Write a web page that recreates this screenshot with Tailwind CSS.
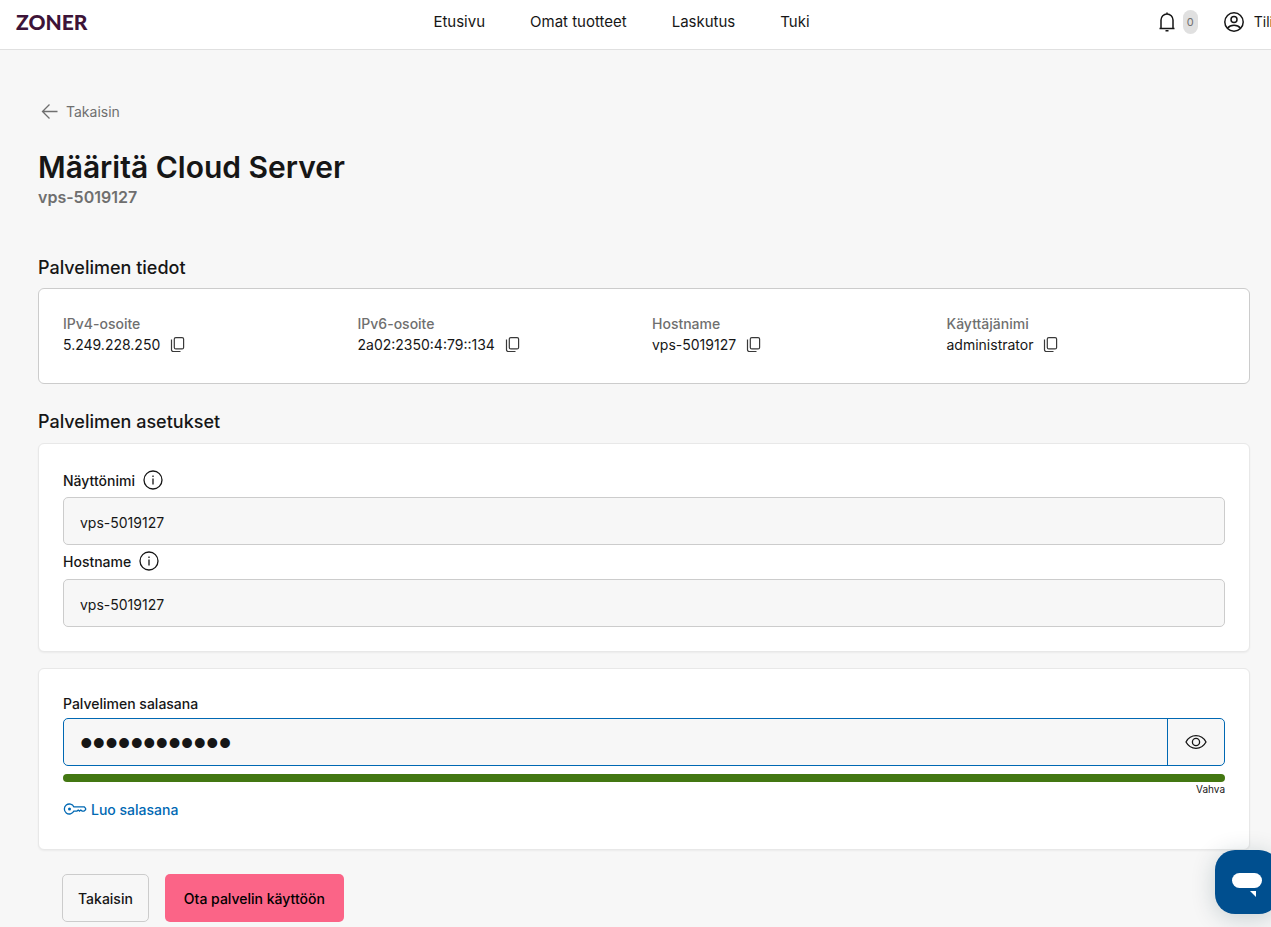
<!DOCTYPE html>
<html lang="fi">
<head>
    <meta charset="UTF-8">
    <meta name="viewport" content="width=device-width, initial-scale=1.0">
    <title>Määritä Cloud Server</title>
    <script src="https://cdn.jsdelivr.net/npm/@tailwindcss/browser@4"></script>
</head>
<body class="min-h-screen overflow-x-hidden bg-[#f7f7f7] font-['Inter',sans-serif] text-sm text-[#161616]">

    <!-- Top bar -->
    <header class="grid h-[50px] grid-cols-[1fr_auto_1fr] items-center border-b border-[#e0e0e0] bg-white pb-1.5 pl-4">
        <a href="#" class="font-['Lato',sans-serif] text-[21px] font-black text-[#3d1438]">ZONER</a>
        <nav class="mr-11 flex gap-[45px] text-[15px]">
            <a href="#">Etusivu</a>
            <a href="#">Omat tuotteet</a>
            <a href="#">Laskutus</a>
            <a href="#">Tuki</a>
        </nav>
        <div class="-mr-0.5 flex items-center justify-end">
            <button class="flex items-center gap-1" aria-label="Ilmoitukset">
                <svg class="size-6" viewBox="0 0 24 24" fill="none" stroke="currentColor" stroke-width="1.5">
                    <path d="M6 18.5V10a6 6 0 0 1 12 0v8.500M4.500 18.500h15M12 4V2.500M10.500 20.800h3"/>
                </svg>
                <span class="rounded-lg bg-[#e0e0e0] px-1 py-1 text-[11px] leading-4 text-[#6f6f6f]">0</span>
            </button>
            <button class="ml-6 flex items-center gap-2">
                <svg class="size-6" viewBox="0 0 24 24" fill="none" stroke="currentColor" stroke-width="1.5">
                    <circle cx="12" cy="12" r="9.200"/>
                    <circle cx="12" cy="9.500" r="3"/>
                    <path d="M5.500 18.300c1.500-2 3.700-3 6.500-3s5 1 6.500 3"/>
                </svg>
                Tili
            </button>
        </div>
    </header>

    <main class="pt-[50px] pr-[21px] pb-1 pl-[38px]">
        <a href="#" class="flex w-fit items-center gap-1 text-[#6f6f6f]">
            <svg class="size-6" viewBox="0 0 24 24" fill="none" stroke="currentColor" stroke-width="1.3">
                <path d="M19.500 11.500h-15M11.500 4.500l-7 7 7 7"/>
            </svg>
            Takaisin
        </a>
        <h1 class="mt-[23px] text-3xl leading-10 font-semibold">Määritä Cloud Server</h1>
        <p class="text-base leading-5 font-semibold text-[#6f6f6f]">vps-5019127</p>

        <!-- Server info -->
        <h2 class="mt-[49px] text-lg leading-6 font-medium">Palvelimen tiedot</h2>
        <dl class="mt-2 grid h-24 grid-cols-4 gap-4 rounded-md border border-[#cccccc] bg-white px-6 pt-[25px]">
            <div>
                <dt class="leading-5 font-medium text-[#6f6f6f]">IPv4-osoite</dt>
                <dd class="flex items-center gap-2.5 leading-[22px]">5.249.228.250
                    <button aria-label="Kopioi IPv4-osoite"><svg class="size-4" viewBox="0 0 16 16" fill="none" stroke="#393939" stroke-width="1.200"><rect x="4.300" y="0.600" width="9.300" height="11.300" rx="1.500"/><path d="M1.500 2.500v10.200a1.800 1.800 0 0 0 1.800 1.800H10.500"/></svg></button>
                </dd>
            </div>
            <div>
                <dt class="leading-5 font-medium text-[#6f6f6f]">IPv6-osoite</dt>
                <dd class="flex items-center gap-2.5 leading-[22px]">2a02:2350:4:79::134
                    <button aria-label="Kopioi IPv6-osoite"><svg class="size-4" viewBox="0 0 16 16" fill="none" stroke="#393939" stroke-width="1.200"><rect x="4.300" y="0.600" width="9.300" height="11.300" rx="1.500"/><path d="M1.500 2.500v10.200a1.800 1.800 0 0 0 1.800 1.800H10.500"/></svg></button>
                </dd>
            </div>
            <div>
                <dt class="leading-5 font-medium text-[#6f6f6f]">Hostname</dt>
                <dd class="flex items-center gap-2.5 leading-[22px]">vps-5019127
                    <button aria-label="Kopioi hostname"><svg class="size-4" viewBox="0 0 16 16" fill="none" stroke="#393939" stroke-width="1.200"><rect x="4.300" y="0.600" width="9.300" height="11.300" rx="1.500"/><path d="M1.500 2.500v10.200a1.800 1.800 0 0 0 1.800 1.800H10.500"/></svg></button>
                </dd>
            </div>
            <div>
                <dt class="leading-5 font-medium text-[#6f6f6f]">Käyttäjänimi</dt>
                <dd class="flex items-center gap-2.5 leading-[22px]">administrator
                    <button aria-label="Kopioi käyttäjänimi"><svg class="size-4" viewBox="0 0 16 16" fill="none" stroke="#393939" stroke-width="1.200"><rect x="4.300" y="0.600" width="9.300" height="11.300" rx="1.500"/><path d="M1.500 2.500v10.200a1.800 1.800 0 0 0 1.800 1.800H10.500"/></svg></button>
                </dd>
            </div>
        </dl>

        <!-- Server settings -->
        <h2 class="mt-[26px] text-lg leading-6 font-medium">Palvelimen asetukset</h2>
        <form>
            <div class="mt-[9px] rounded-md border border-[#e8e8e8] bg-white p-6 shadow-xs">
                <div class="flex h-[29px] items-start gap-1.5">
                    <label for="displayName" class="leading-[26px] font-medium">Näyttönimi</label>
                    <svg class="size-6" viewBox="0 0 24 24" fill="none" stroke="currentColor" stroke-width="1.300">
                        <circle cx="12" cy="12" r="9"/><path d="M12 10.500v6M12 7.500v1.500"/>
                    </svg>
                </div>
                <input id="displayName" type="text" value="vps-5019127" class="block h-12 w-full rounded-[5px] border border-[#cccccc] bg-[#f7f7f7] px-4 pt-0.5">
                <div class="mt-1 flex h-[30px] items-start gap-1.5">
                    <label for="hostname" class="leading-[26px] font-medium">Hostname</label>
                    <svg class="size-6" viewBox="0 0 24 24" fill="none" stroke="currentColor" stroke-width="1.300">
                        <circle cx="12" cy="12" r="9"/><path d="M12 10.500v6M12 7.500v1.500"/>
                    </svg>
                </div>
                <input id="hostname" type="text" value="vps-5019127" class="block h-12 w-full rounded-[5px] border border-[#cccccc] bg-[#f7f7f7] px-4 pt-0.5">
            </div>

            <div class="mt-4 rounded-md border border-[#e8e8e8] bg-white px-6 pt-6 pb-[27px] shadow-xs">
                <label for="password" class="block pb-[3px] leading-[22px] font-medium">Palvelimen salasana</label>
                <div class="flex h-12 overflow-hidden rounded-[5px] border border-[#0068b3] bg-[#f7f7f7]">
                    <input id="password" type="password" value="salasana1234" class="min-w-0 flex-1 px-4 pt-0.5 font-['Liberation_Sans',sans-serif] text-4xl outline-none">
                    <button type="button" onclick="togglePassword()" aria-label="Näytä salasana" class="flex w-[57px] items-center justify-center border-l border-[#0068b3]">
                        <svg class="size-6" viewBox="0 0 24 24" fill="none" stroke="currentColor" stroke-width="1.300">
                            <path d="M2 12c2.300-4.200 5.700-6.300 10-6.300s7.700 2.100 10 6.300c-2.300 4.200-5.700 6.300-10 6.300S4.300 16.200 2 12z"/>
                            <circle cx="12" cy="12" r="3.600"/>
                        </svg>
                    </button>
                </div>
                <div class="mt-2 h-2 rounded-full bg-[#437712]"></div>
                <p class="text-right text-[10px] leading-[14px]">Vahva</p>
                <button type="button" class="mt-0.5 flex items-center gap-1 leading-6 font-medium text-[#0068b3]">
                    <svg class="size-6" viewBox="0 1 24 24" fill="none" stroke="currentColor" stroke-width="1.300">
                        <path d="M10.900 9.900A5 5 0 1 0 10.900 14.100H14l1.200-1 1.300 1 1.300-1 1.300 1H21l1.600-1.500v-1.200L21.300 9.900z"/>
                        <circle cx="6.500" cy="12" r="1.500" fill="currentColor" stroke="none"/>
                    </svg>
                    Luo salasana
                </button>
            </div>

            <div class="mt-6 flex gap-4 px-6">
                <button type="button" class="h-12 rounded-[5px] border border-[#cccccc] px-[15px] pt-0.5 font-medium">Takaisin</button>
                <button type="submit" class="h-12 rounded-[5px] bg-[#fb6487] px-[19px] pt-0.5 font-medium text-black">Ota palvelin käyttöön</button>
            </div>
        </form>
    </main>

    <!-- Chat launcher -->
    <button aria-label="Avaa chat" class="fixed -right-2 bottom-[13px] flex size-16 items-center justify-center rounded-[20px] bg-[#004f8f] shadow-[0_4px_24px_rgba(0,50,60,0.2)]">
        <svg class="size-8" viewBox="0 0 32 32" fill="white">
            <rect x="1" y="7" width="30" height="15" rx="7.500"/><path d="M19 25h6v6z"/>
        </svg>
    </button>

    <script>
        function togglePassword() {
            const input = document.getElementById("password");
            const hidden = input.type === "password";
            input.type = hidden ? "text" : "password";
            // big type is only for the dots
            input.classList.toggle("text-4xl", !hidden);
        }
    </script>

</body>
</html>
